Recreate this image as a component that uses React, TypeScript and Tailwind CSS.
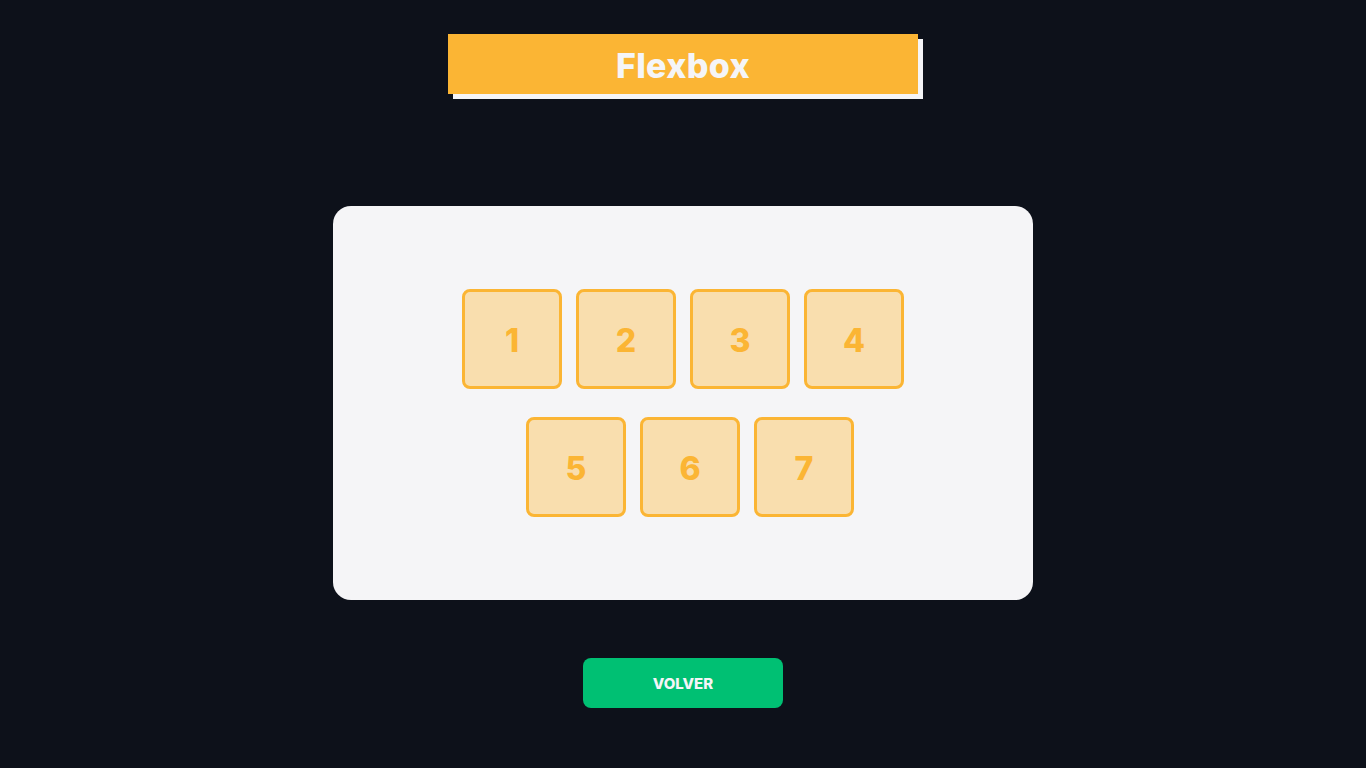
function Box({ n }: { n: number }) {
  return (
    <div className="w-[100px] h-[100px] rounded-[8px] border-[3px] border-[#fbb534] bg-[#f9deae] flex items-center justify-center">
      <span className="text-[#fbb534] text-[32px] font-extrabold pt-[4px]">{n}</span>
    </div>
  );
}

export default function App() {
  return (
    <div
      className="min-h-screen w-full bg-[#0d111a] flex flex-col items-center"
      style={{ fontFamily: "Inter, 'Noto Sans', sans-serif" }}
    >
      <div className="mt-[34px] relative w-[470px] h-[60px]">
        <div className="absolute left-[5px] top-[5px] w-[470px] h-[60px] bg-[#f5f5f7]" />
        <div className="relative w-[470px] h-[60px] bg-[#fbb534] flex items-center justify-center">
          <span className="text-[#f5f5f7] text-[34px] font-extrabold tracking-[0.01em] pt-[2px]">Flexbox</span>
        </div>
      </div>

      <div className="mt-[112px] w-[700px] h-[394px] bg-[#f5f5f7] rounded-[18px] flex flex-col items-center justify-center gap-[28px]">
        <div className="flex gap-[14px]">
          {[1, 2, 3, 4].map((n) => (
            <Box key={n} n={n} />
          ))}
        </div>
        <div className="flex gap-[14px] pl-[14px]">
          {[5, 6, 7].map((n) => (
            <Box key={n} n={n} />
          ))}
        </div>
      </div>

      <button className="mt-[58px] w-[200px] h-[50px] rounded-[8px] bg-[#00c073] text-[#f5f5f7] text-[15px] font-extrabold pt-[3px]">
        VOLVER
      </button>
    </div>
  );
}
